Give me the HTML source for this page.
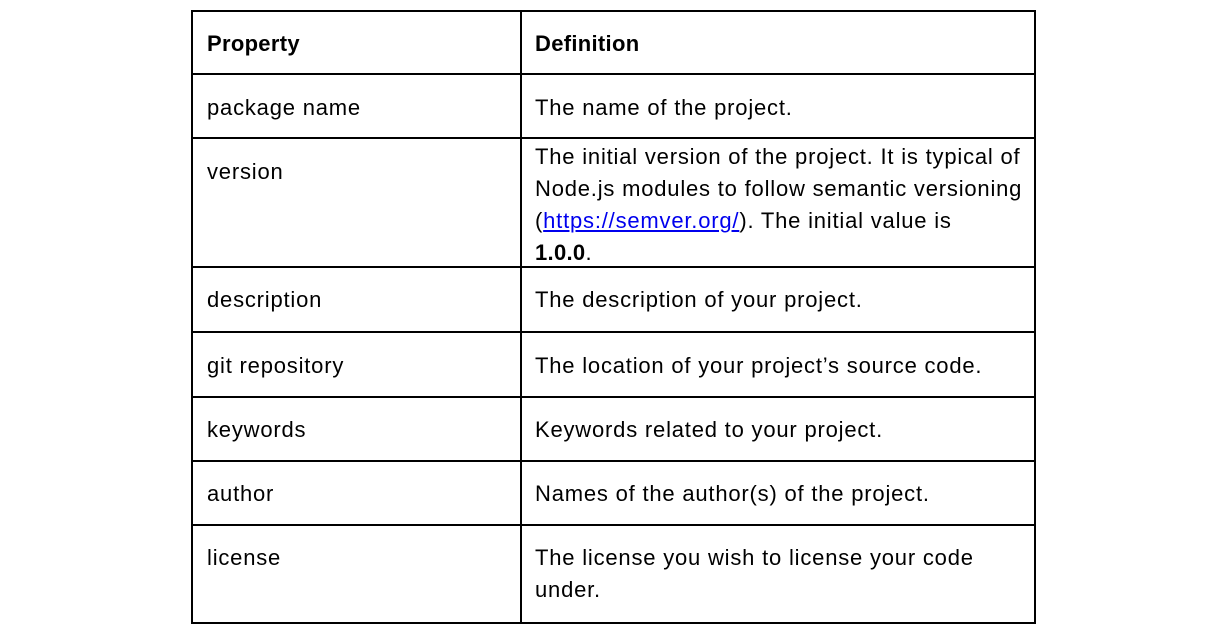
<!DOCTYPE html>
<html><head><style>
body{margin:0;width:1232px;height:634px;background:#fff;position:relative;overflow:hidden;font-family:"Liberation Sans",sans-serif;font-size:22px;color:#000}
.h{position:absolute;left:191px;width:845px;height:2px;background:#000}
.v{position:absolute;top:10px;height:614px;width:2px;background:#000}
.t{position:absolute;line-height:32px;white-space:nowrap;letter-spacing:0.8px}
.l{left:207px}.r{left:535px}
b{font-weight:bold;letter-spacing:0.3px}
a{color:#0000ee;text-decoration:underline}
</style></head><body>
<div class="h" style="top:10px"></div>
<div class="h" style="top:73px"></div>
<div class="h" style="top:137px"></div>
<div class="h" style="top:266px"></div>
<div class="h" style="top:331px"></div>
<div class="h" style="top:396px"></div>
<div class="h" style="top:460px"></div>
<div class="h" style="top:524px"></div>
<div class="h" style="top:622px"></div>
<div class="v" style="left:191px"></div>
<div class="v" style="left:520px"></div>
<div class="v" style="left:1034px"></div>

<div class="t l" style="top:28px"><b>Property</b></div>
<div class="t r" style="top:28px"><b>Definition</b></div>
<div class="t l" style="top:92px">package name</div>
<div class="t r" style="top:92px">The name of the project.</div>
<div class="t l" style="top:156px">version</div>
<div class="t r" style="top:141px">The initial version of the project. It is typical of<br>Node.js modules to follow semantic versioning<br>(<a>https://semver.org/</a>). The initial value is<br><b>1.0.0</b>.</div>
<div class="t l" style="top:284px">description</div>
<div class="t r" style="top:284px">The description of your project.</div>
<div class="t l" style="top:350px">git repository</div>
<div class="t r" style="top:350px">The location of your project’s source code.</div>
<div class="t l" style="top:414px">keywords</div>
<div class="t r" style="top:414px">Keywords related to your project.</div>
<div class="t l" style="top:478px">author</div>
<div class="t r" style="top:478px">Names of the author(s) of the project.</div>
<div class="t l" style="top:542px">license</div>
<div class="t r" style="top:542px">The license you wish to license your code<br>under.</div>
</body></html>
